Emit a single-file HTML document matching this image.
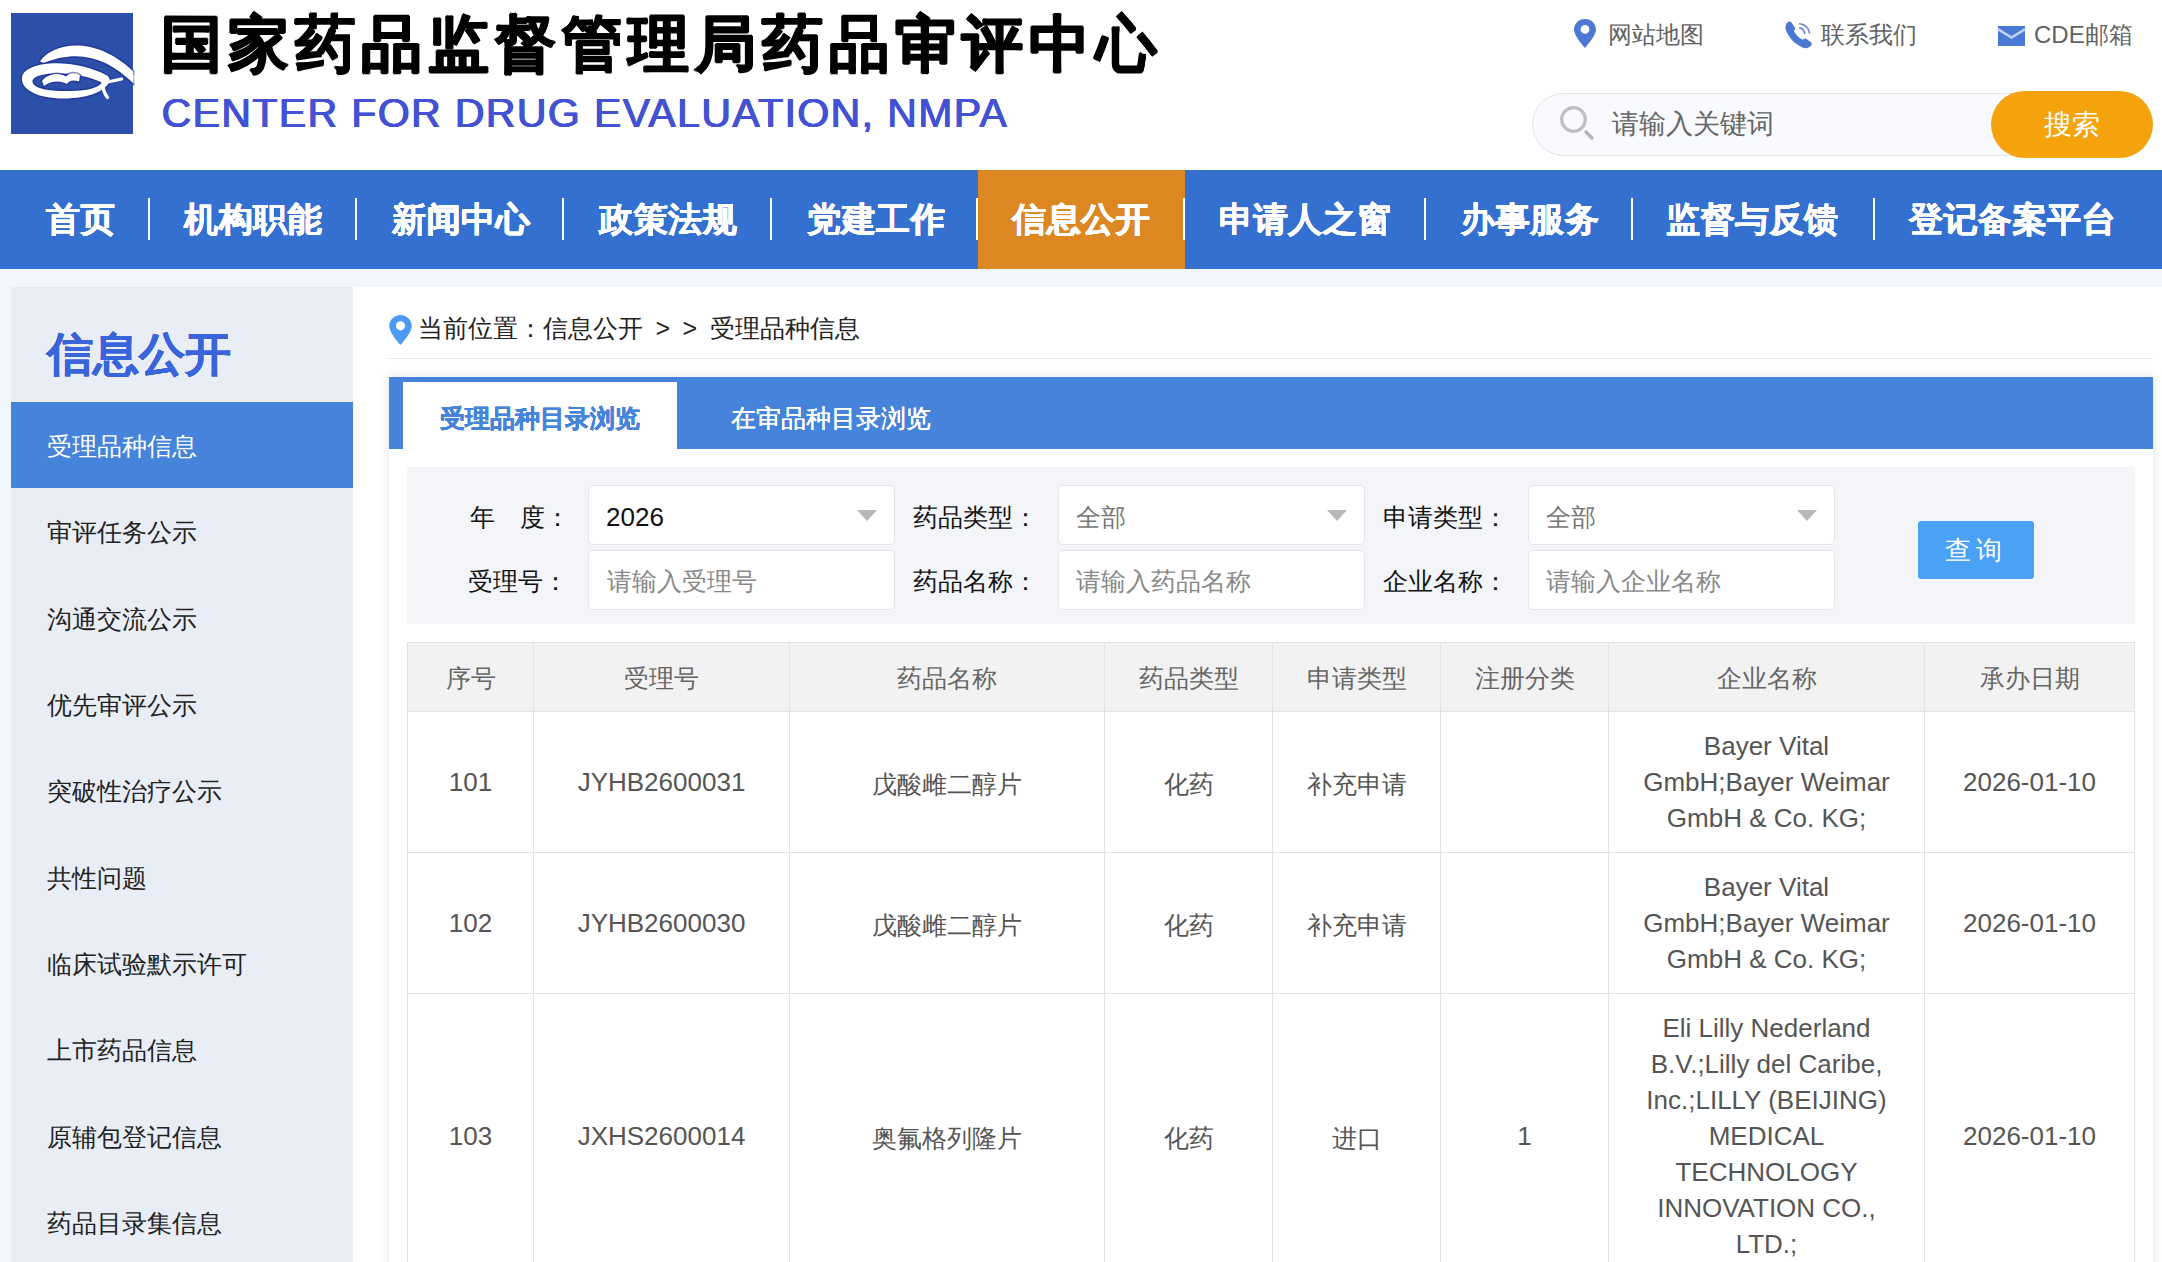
<!DOCTYPE html>
<html><head><meta charset="utf-8">
<style>
*{box-sizing:border-box;margin:0;padding:0}
html,body{width:2162px;height:1262px;overflow:hidden;background:#fff}
body{position:relative;font-family:"Liberation Sans",sans-serif;color:#222}
.a{position:absolute;white-space:nowrap}
#title{left:161px;top:9px;font-size:60.5px;font-weight:bold;color:#000;text-shadow:0.8px 0 0 #000,-0.8px 0 0 #000,0 0.8px 0 #000,0 -0.8px 0 #000;line-height:70px;letter-spacing:5.75px}
#en{left:161.5px;top:88.5px;font-size:41px;font-weight:normal;color:#4352d2;letter-spacing:1.4px;line-height:48px;text-shadow:0.7px 0 0 #4352d2,-0.5px 0 0 #4352d2,0 0.3px 0 #4352d2}
.tl{font-size:24px;color:#626262;line-height:30px;top:20px}
#sbox{left:1532px;top:93px;width:520px;height:63px;border:1px solid #e2e4e8;border-radius:32px 0 0 32px;background:#f8fafd}
#sph{left:1612px;top:106px;font-size:27px;color:#666;line-height:36px}
#sbtn{left:1991px;top:91px;width:162px;height:67px;border-radius:34px;background:#f4a30d;color:#fff;font-size:28px;line-height:67px;text-align:center}
#nav{left:0;top:170px;width:2162px;height:99px;background:#3470cf}
#navact{left:978px;top:170px;width:207px;height:99px;background:#dc8722}
.ni{top:170px;line-height:99px;font-size:34px;letter-spacing:0.5px;font-weight:bold;color:#fff;text-shadow:0.35px 0 0 #fff,-0.35px 0 0 #fff,0 0.35px 0 #fff,0 -0.35px 0 #fff}
.ns{top:198px;width:2px;height:42px;background:#fff}
#pgbg{left:0;top:269px;width:2162px;height:993px;background:#f2f6fd}
#white{left:353px;top:287px;width:1809px;height:975px;background:#fff}
#side{left:11px;top:287px;width:342px;height:975px;background:#e9edf6}
#stitle{left:47px;top:322px;font-size:46px;font-weight:bold;color:#3a64da;line-height:64px;text-shadow:0.45px 0 0 #3a64da,-0.45px 0 0 #3a64da,0 0.45px 0 #3a64da,0 -0.45px 0 #3a64da}
.si{left:11px;width:342px;height:86.33px;font-size:25px;color:#222;padding-left:36px;line-height:89px}
.si.on{background:#4584da;color:#fff}
#bc{left:418px;top:310px;font-size:25px;color:#222;line-height:36px}
.gt{display:inline-block;margin:0 0 0 12.5px}
.gt+.gt{margin-right:13px}
#bcline{left:389px;top:358px;width:1764px;height:1px;background:#e6e6e6}
#panel{left:389px;top:377px;width:1764px;height:900px;background:#fff;box-shadow:0 0 10px rgba(30,60,130,0.15)}
#tabbar{left:389px;top:377px;width:1764px;height:72px;background:#4584da}
#tab1{left:403px;top:382px;width:274px;height:67px;background:#fff}
.tab{top:397.5px;font-size:25px;font-weight:bold;line-height:40px}
#filter{left:407px;top:467px;width:1727.5px;height:157px;background:#f3f5f9}
.lab{font-size:25px;color:#111;line-height:36px}
.inp{width:307px;height:60px;background:#fff;border:1px solid #e4e6ea;border-radius:5px}
.val{font-size:25px;line-height:36px}
.arr{width:0;height:0;border-left:10px solid transparent;border-right:10px solid transparent;border-top:11px solid #b8b8b8}
#qbtn{left:1918px;top:521px;width:116px;height:58px;background:#4aa2f7;border-radius:3px;color:#fff;font-size:26px;line-height:58px;text-align:center;letter-spacing:5px;text-indent:0px}
table{position:absolute;left:407px;top:642px;border-collapse:collapse;table-layout:fixed;width:1727px}
td,th{border:1px solid #e3e3e3;text-align:center;vertical-align:middle;font-size:26px;color:#555;font-weight:normal;line-height:36px;padding:16px 4px;white-space:nowrap}
th{background:#f2f2f2;height:69px;padding:2px 8px 0;color:#666;font-size:25px}
td.c{font-size:25px;padding-top:19px;padding-bottom:16px}
</style></head><body>
<div class="a" id="pgbg"></div>
<div class="a" id="white"></div>
<svg class="a" style="left:11px;top:13px" width="140" height="122" viewBox="0 0 140 122">
<defs><linearGradient id="fade" x1="0" y1="0" x2="1" y2="1"><stop offset="0" stop-color="#fff" stop-opacity="1"/><stop offset="1" stop-color="#fff" stop-opacity="0"/></linearGradient></defs>
<rect x="0" y="0" width="122" height="121" fill="#2c50aa"/>
<g stroke="#1a2a8c" stroke-width="3" stroke-opacity="0.55" paint-order="stroke">
<path d="M29,48.5 C40,31 82,20 122,58 L122,70 C98,47 70,35 33,50 Z" fill="#fff"/>
<path fill-rule="evenodd" fill="#fff" d="M11,64.5 C12,49 60,43 97,63 L99,67 C96,77 80,85.5 52,85.5 C26,85.5 9.5,76 11,64.5 Z M21.5,67.5 C24,59 62,56 91,69.5 C86,76.5 72,78 52,78 C33,78 20.5,74 21.5,67.5 Z"/>
<path d="M31,68 C37,60 49,59.5 55,63.5 C58,59.5 65,59 69,62.5 L68,68.5 C62,66.5 58,67.5 56,71 C50,67.5 40,67.5 33,73 Z" fill="#fff"/>
</g>
<path d="M92,70 L110.5,66 M92.5,70.5 Q91,77 96.5,84.5" stroke="#fff" stroke-width="3.2" fill="none" stroke-linecap="round"/>
<path d="M121,59 L124,63 C128,69 131,75 133,81 L129,79 C127,75 124,71 121,68 Z" fill="url(#fade)" opacity="0.6"/>
</svg>
<svg class="a" style="left:1573px;top:18px" width="24" height="31" viewBox="0 0 24 31"><path d="M12,1 C5.8,1 1,5.8 1,11.5 C1,18 12,30 12,30 C12,30 23,18 23,11.5 C23,5.8 18.2,1 12,1 Z M12,7 A4.4,4.4 0 1 0 12,15.8 A4.4,4.4 0 1 0 12,7 Z" fill="#4a78d2" fill-rule="evenodd"/></svg>
<svg class="a" style="left:1784px;top:20px" width="29" height="29" viewBox="0 0 29 29"><path d="M4,2 C1.5,3.5 0.5,7 2.5,11.5 C6,19 11,24 18.5,27.5 C22,29 25.5,28 27.5,25 C28,24 27.8,23 27,22.3 L22.5,19 C21.5,18.3 20.3,18.5 19.5,19.3 L18.8,19.8 C15,18 11.5,14.5 9.8,11 L10.5,10.3 C11.3,9.5 11.4,8.3 10.8,7.4 L7.5,2.6 C6.8,1.6 5.3,1.3 4,2 Z" fill="#4a78d2"/><path d="M15.8,3.8 C20.5,4.5 24.5,8 25.5,13 M15.8,7.9 C18.5,8.5 20.2,10.5 20.7,13.5" stroke="#6d86cf" stroke-width="1.6" fill="none" stroke-linecap="round"/></svg>
<svg class="a" style="left:1998px;top:26px" width="27" height="20" viewBox="0 0 27 20"><rect x="0" y="0" width="27" height="20" fill="#4a78d2"/><path d="M0,3.2 L13.5,11.5 L27,3.2" stroke="#bcd0f4" stroke-width="2.6" fill="none"/></svg>
<svg class="a" style="left:388px;top:314px" width="25" height="32" viewBox="0 0 25 32"><path d="M12.5,1 C6.2,1 1.2,6 1.2,12 C1.2,19 12.5,31 12.5,31 C12.5,31 23.8,19 23.8,12 C23.8,6 18.8,1 12.5,1 Z M12.5,7.2 A4.6,4.6 0 1 0 12.5,16.4 A4.6,4.6 0 1 0 12.5,7.2 Z" fill="#4b9bf5" fill-rule="evenodd"/></svg>
<div class="a" id="title">国家药品监督管理局药品审评中心</div>
<div class="a" id="en">CENTER FOR DRUG EVALUATION, NMPA</div>
<div class="a tl" style="left:1608px">网站地图</div>
<div class="a tl" style="left:1821px">联系我们</div>
<div class="a tl" style="left:2034px">CDE邮箱</div>
<div class="a" id="sbox"></div>
<svg class="a" style="left:1557px;top:103px" width="40" height="40" viewBox="0 0 40 40"><circle cx="16.5" cy="16.5" r="11.8" stroke="#c0c0c0" stroke-width="3.3" fill="none"/><path d="M29,29 L35,35" stroke="#b8b8b8" stroke-width="3.6" stroke-linecap="round"/></svg>
<div class="a" id="sph">请输入关键词</div>
<div class="a" id="sbtn">搜索</div>
<div class="a" id="nav"></div>
<div class="a" id="navact"></div>
<div class="a ni" style="left:46px">首页</div>
<div class="a ni" style="left:184px">机构职能</div>
<div class="a ni" style="left:392px">新闻中心</div>
<div class="a ni" style="left:599px">政策法规</div>
<div class="a ni" style="left:807px">党建工作</div>
<div class="a ni" style="left:1012px">信息公开</div>
<div class="a ni" style="left:1219px">申请人之窗</div>
<div class="a ni" style="left:1461px">办事服务</div>
<div class="a ni" style="left:1666px">监督与反馈</div>
<div class="a ni" style="left:1909px">登记备案平台</div>
<div class="a ns" style="left:148px"></div>
<div class="a ns" style="left:355px"></div>
<div class="a ns" style="left:562px"></div>
<div class="a ns" style="left:770px"></div>
<div class="a ns" style="left:976px"></div>
<div class="a ns" style="left:1183px"></div>
<div class="a ns" style="left:1424px"></div>
<div class="a ns" style="left:1631px"></div>
<div class="a ns" style="left:1873px"></div>
<div class="a" id="side"></div>
<div class="a" id="stitle">信息公开</div>
<div class="a si on" style="top:402px">受理品种信息</div>
<div class="a si" style="top:488.33px">审评任务公示</div>
<div class="a si" style="top:574.66px">沟通交流公示</div>
<div class="a si" style="top:661px">优先审评公示</div>
<div class="a si" style="top:747.33px">突破性治疗公示</div>
<div class="a si" style="top:833.66px">共性问题</div>
<div class="a si" style="top:920px">临床试验默示许可</div>
<div class="a si" style="top:1006.33px">上市药品信息</div>
<div class="a si" style="top:1092.66px">原辅包登记信息</div>
<div class="a si" style="top:1179px">药品目录集信息</div>
<div class="a" id="bc">当前位置：信息公开<span class="gt">&gt;</span><span class="gt">&gt;</span>受理品种信息</div>
<div class="a" id="bcline"></div>
<div class="a" id="panel"></div>
<div class="a" id="tabbar"></div>
<div class="a" id="tab1"></div>
<div class="a tab" style="left:440px;color:#4584da;text-shadow:0.4px 0 0 #4584da,-0.4px 0 0 #4584da,0 0.4px 0 #4584da">受理品种目录浏览</div>
<div class="a tab" style="left:731px;color:#fff;font-weight:normal;text-shadow:0.35px 0 0 #fff,-0.35px 0 0 #fff">在审品种目录浏览</div>
<div class="a" id="filter"></div>
<div class="a lab" style="left:470px;top:499px">年　度：</div>
<div class="a lab" style="left:913px;top:499px">药品类型：</div>
<div class="a lab" style="left:1383px;top:499px">申请类型：</div>
<div class="a lab" style="left:468px;top:563px">受理号：</div>
<div class="a lab" style="left:913px;top:563px">药品名称：</div>
<div class="a lab" style="left:1383px;top:563px">企业名称：</div>
<div class="a inp" style="left:588px;top:485px"></div>
<div class="a inp" style="left:1058px;top:485px"></div>
<div class="a inp" style="left:1528px;top:485px"></div>
<div class="a inp" style="left:588px;top:550px"></div>
<div class="a inp" style="left:1058px;top:550px"></div>
<div class="a inp" style="left:1528px;top:550px"></div>
<div class="a val" style="left:606px;top:498.5px;color:#111;font-size:26px">2026</div>
<div class="a val" style="left:1076px;top:499px;color:#777">全部</div>
<div class="a val" style="left:1546px;top:499px;color:#777">全部</div>
<div class="a val" style="left:607px;top:563px;color:#888">请输入受理号</div>
<div class="a val" style="left:1076px;top:563px;color:#888">请输入药品名称</div>
<div class="a val" style="left:1546px;top:563px;color:#888">请输入企业名称</div>
<div class="a arr" style="left:857px;top:510px"></div>
<div class="a arr" style="left:1327px;top:510px"></div>
<div class="a arr" style="left:1797px;top:510px"></div>
<div class="a" id="qbtn">查询</div>
<table>
<colgroup><col style="width:126px"><col style="width:256px"><col style="width:315px"><col style="width:168px"><col style="width:168px"><col style="width:168px"><col style="width:316px"><col style="width:210px"></colgroup>
<tr><th>序号</th><th>受理号</th><th>药品名称</th><th>药品类型</th><th>申请类型</th><th>注册分类</th><th>企业名称</th><th>承办日期</th></tr>
<tr><td>101</td><td>JYHB2600031</td><td class="c">戊酸雌二醇片</td><td class="c">化药</td><td class="c">补充申请</td><td></td><td>Bayer Vital<br>GmbH;Bayer Weimar<br>GmbH &amp; Co. KG;</td><td>2026-01-10</td></tr>
<tr><td>102</td><td>JYHB2600030</td><td class="c">戊酸雌二醇片</td><td class="c">化药</td><td class="c">补充申请</td><td></td><td>Bayer Vital<br>GmbH;Bayer Weimar<br>GmbH &amp; Co. KG;</td><td>2026-01-10</td></tr>
<tr><td>103</td><td>JXHS2600014</td><td class="c">奥氟格列隆片</td><td class="c">化药</td><td class="c">进口</td><td>1</td><td>Eli Lilly Nederland<br>B.V.;Lilly del Caribe,<br>Inc.;LILLY (BEIJING)<br>MEDICAL<br>TECHNOLOGY<br>INNOVATION CO.,<br>LTD.;</td><td>2026-01-10</td></tr>
</table>
</body></html>
